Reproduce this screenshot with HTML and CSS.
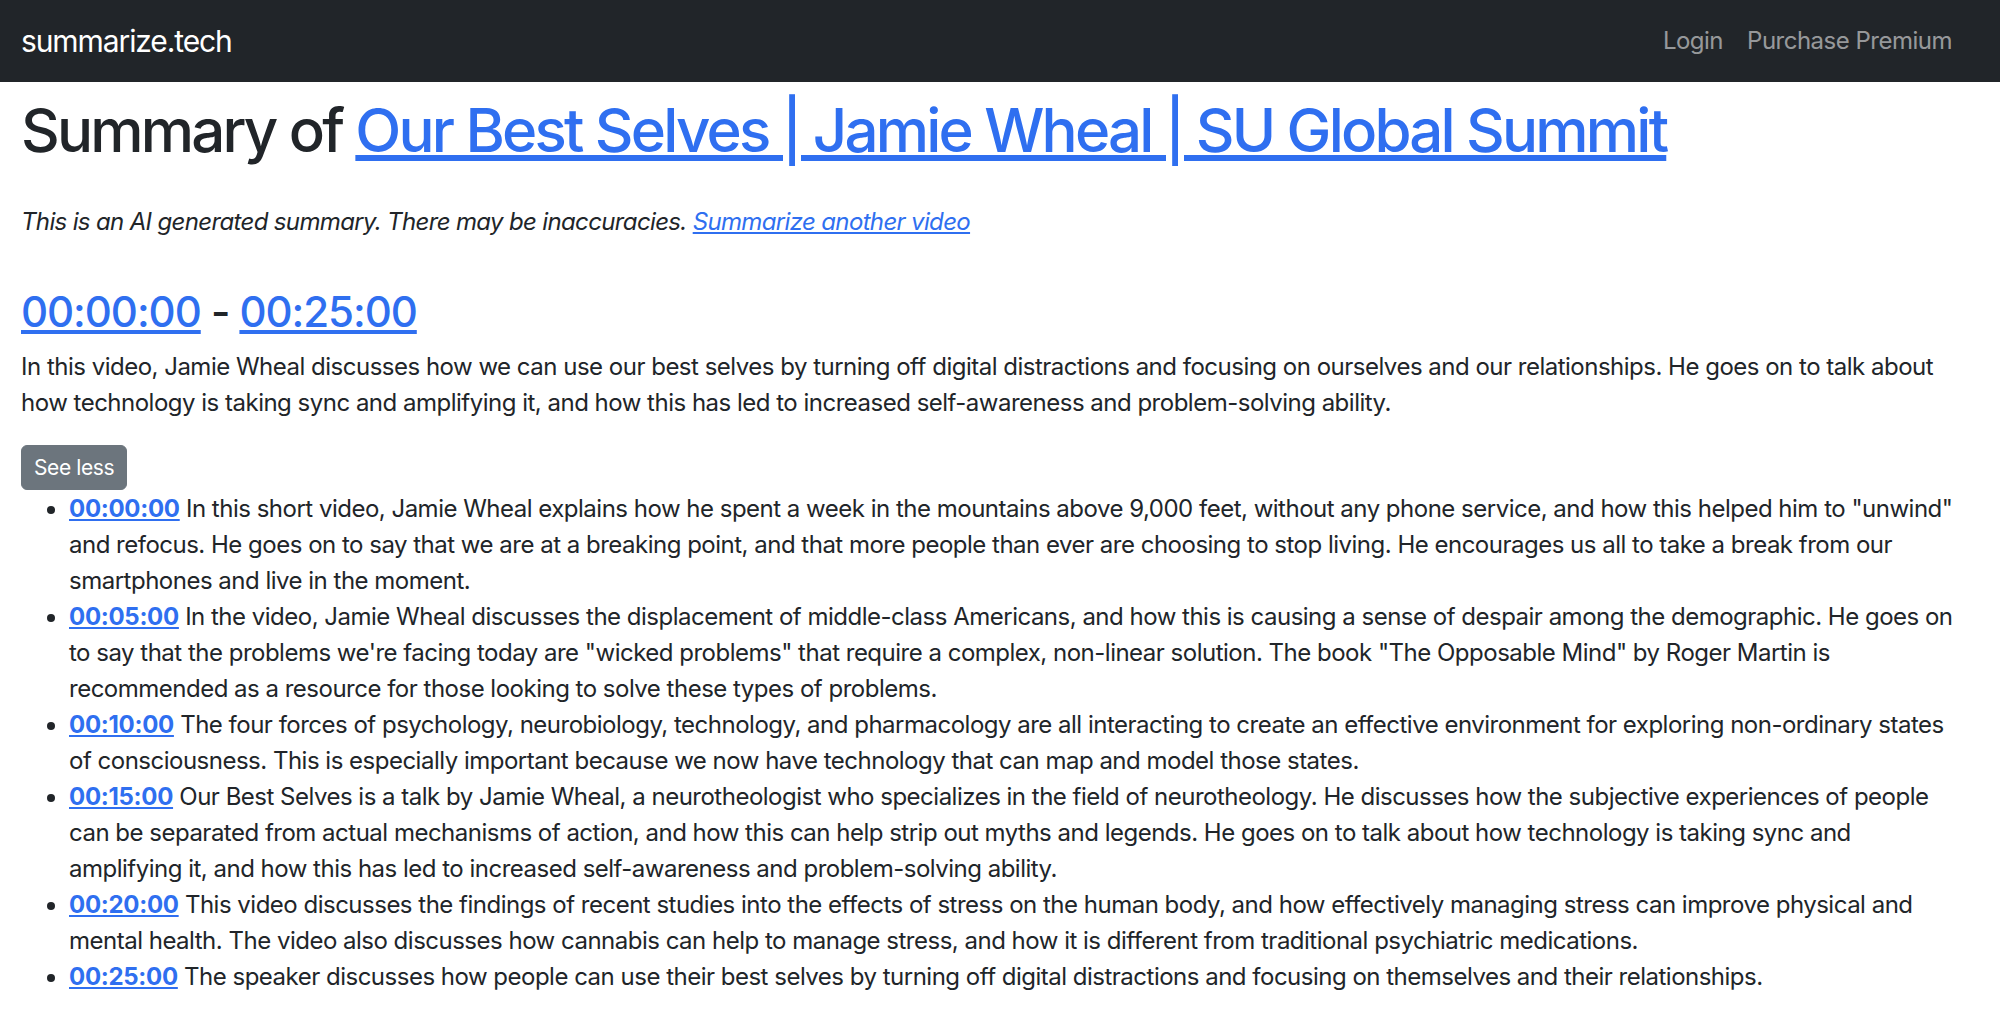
FILE: index.html
```html
<!DOCTYPE html>
<html lang="en">
<head>
<meta charset="utf-8">
<title>Summary of Our Best Selves | Jamie Wheal | SU Global Summit</title>
<link rel="stylesheet" href="styles.css">
</head>
<body>
<nav class="navbar">
  <a class="brand" href="#">summarize.tech</a>
  <div class="nav-links">
    <a class="nav-link" href="#">Login</a>
    <a class="nav-link" href="#">Purchase Premium</a>
  </div>
</nav>
<main class="content">
  <h1 class="title">Summary of <a href="#">Our Best Selves | Jamie Wheal | SU Global Summit</a></h1>
  <p class="disclaimer"><i>This is an AI generated summary. There may be inaccuracies. <a href="#">Summarize another video</a></i></p>
  <section class="chunk">
    <h3 class="range"><a href="#">00:00:00</a> - <a href="#">00:25:00</a></h3>
    <p class="overview">In this video, Jamie Wheal discusses how we can use our best selves by turning off digital distractions and focusing on ourselves and our relationships. He goes on to talk about how technology is taking sync and amplifying it, and how this has led to increased self-awareness and problem-solving ability.</p>
    <button class="btn">See less</button>
    <ul class="items">
      <li><a class="ts" href="#">00:00:00</a> In this short video, Jamie Wheal explains how he spent a week in the mountains above 9,000 feet, without any phone service, and how this helped him to "unwind" and refocus. He goes on to say that we are at a breaking point, and that more people than ever are choosing to stop living. He encourages us all to take a break from our smartphones and live in the moment.</li>
      <li><a class="ts" href="#">00:05:00</a> In the video, Jamie Wheal discusses the displacement of middle-class Americans, and how this is causing a sense of despair among the demographic. He goes on to say that the problems we're facing today are "wicked problems" that require a complex, non-linear solution. The book "The Opposable Mind" by Roger Martin is recommended as a resource for those looking to solve these types of problems.</li>
      <li><a class="ts" href="#">00:10:00</a> The four forces of psychology, neurobiology, technology, and pharmacology are all interacting to create an effective environment for exploring non-ordinary states of consciousness. This is especially important because we now have technology that can map and model those states.</li>
      <li><a class="ts" href="#">00:15:00</a> Our Best Selves is a talk by Jamie Wheal, a neurotheologist who specializes in the field of neurotheology. He discusses how the subjective experiences of people can be separated from actual mechanisms of action, and how this can help strip out myths and legends. He goes on to talk about how technology is taking sync and amplifying it, and how this has led to increased self-awareness and problem-solving ability.</li>
      <li><a class="ts" href="#">00:20:00</a> This video discusses the findings of recent studies into the effects of stress on the human body, and how effectively managing stress can improve physical and mental health. The video also discusses how cannabis can help to manage stress, and how it is different from traditional psychiatric medications.</li>
      <li><a class="ts" href="#">00:25:00</a> The speaker discusses how people can use their best selves by turning off digital distractions and focusing on themselves and their relationships.</li>
    </ul>
  </section>
</main>
</body>
</html>
```
FILE: styles.css
```css
* { box-sizing: border-box; }
html, body {
  margin: 0;
  padding: 0;
  background: #fff;
}
body {
  font-family: Inter, "Noto Sans", "Liberation Sans", sans-serif;
  font-size: 24px;
  line-height: 36px;
  letter-spacing: -0.5px;
  color: #212529;
}
a { color: #2f6ff0; text-decoration: underline; }

.navbar {
  background: #212529;
  height: 82px;
  display: flex;
  align-items: center;
  justify-content: space-between;
  padding: 0 36px 0 21px;
}
.brand {
  color: #fff;
  text-decoration: none;
  font-size: 30px;
  line-height: 45px;
  letter-spacing: -1.1px;
}
.nav-links { display: flex; }
.nav-link {
  color: rgba(255,255,255,0.55);
  text-decoration: none;
  padding: 0 12px;
  font-size: 24px;
  letter-spacing: -0.5px;
}

.content {
  padding: 12px 40px 0 21px;
}
.title {
  font-size: 60px;
  line-height: 72px;
  font-weight: 500;
  letter-spacing: -2.8px;
  margin: 0 0 38px 0;
}
.disclaimer {
  margin: 0 0 47px 0;
  letter-spacing: -0.65px;
}
.range {
  font-size: 42px;
  line-height: 50px;
  font-weight: 500;
  letter-spacing: -1.05px;
  margin: 0 0 12px 0;
}
.overview {
  margin: 0 0 24px 0;
}
.btn {
  display: block;
  font-family: inherit;
  font-size: 21px;
  line-height: 31px;
  letter-spacing: -0.4px;
  padding: 6px 12px;
  color: #fff;
  background: #6c757d;
  border: 1px solid #6c757d;
  border-radius: 6px;
  margin: 0;
}
.items {
  margin: 1px 0 0 0;
  padding-left: 48px;
}
.ts { font-weight: 700; letter-spacing: -0.3px; }
```
